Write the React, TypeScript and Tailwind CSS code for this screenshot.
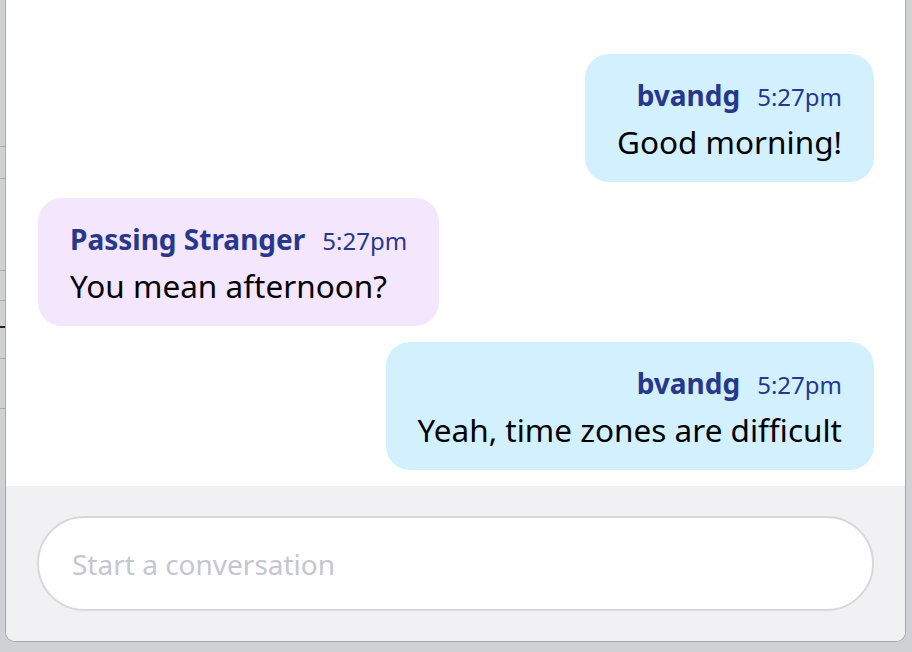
import React from "react";

const font = { fontFamily: '"Noto Sans", "Open Sans", sans-serif' };

function Bubble({
  name,
  time,
  text,
  mine,
}: {
  name: string;
  time: string;
  text: string;
  mine?: boolean;
}) {
  return (
    <div className={mine ? "flex justify-end" : "flex justify-start"}>
      <div
        className={
          "rounded-[24px] pl-8 pr-8 pt-[22px] pb-[19px] " +
          (mine ? "bg-[#d3f0fe] text-right" : "bg-[#f4e6fc] text-left")
        }
      >
        <div
          className={
            "flex items-baseline gap-[17px] h-[38px] leading-[38px] " +
            (mine ? "justify-end" : "justify-start")
          }
        >
          <span className="text-[28px] font-bold text-[#27388c]">{name}</span>
          <span className="text-[24px] text-[#27388c]">{time}</span>
        </div>
        <div className="mt-[7px] text-[31.5px] leading-[42px] text-black">{text}</div>
      </div>
    </div>
  );
}

export default function App() {
  return (
    <div
      className="relative h-[652px] w-[912px] overflow-hidden bg-[#cfd1d5]"
      style={font}
    >
      <div className="absolute left-0 top-[146px] h-px w-[5px] bg-[#a9abb0]" />
      <div className="absolute left-0 top-[178px] h-px w-[5px] bg-[#a9abb0]" />
      <div className="absolute left-0 top-[270px] h-px w-[5px] bg-[#a9abb0]" />
      <div className="absolute left-0 top-[300px] h-px w-[5px] bg-[#a9abb0]" />
      <div className="absolute left-0 top-[326px] h-[2px] w-[5px] bg-[#222]" />
      <div className="absolute left-0 top-[358px] h-px w-[5px] bg-[#a9abb0]" />
      <div className="absolute left-0 top-[408px] h-px w-[5px] bg-[#a9abb0]" />
      <div className="ml-[5px] flex h-[642px] w-[901px] flex-col overflow-hidden rounded-b-[10px] border-x border-b border-[#a8a8ad] bg-white">
        <div className="flex flex-1 flex-col justify-end gap-4 pl-8 pr-[31px] pb-4">
          <Bubble mine name="bvandg" time="5:27pm" text="Good morning!" />
          <Bubble name="Passing Stranger" time="5:27pm" text="You mean afternoon?" />
          <Bubble mine name="bvandg" time="5:27pm" text="Yeah, time zones are difficult" />
        </div>
        <div className="h-[155px] bg-[#f1f1f3] px-[31px] py-[30px]">
          <div className="flex h-[95px] items-center rounded-full border-2 border-[#d7d7dd] bg-white px-[33px]">
            <span className="text-[28px] text-[#c6c6cd]">Start a conversation</span>
          </div>
        </div>
      </div>
    </div>
  );
}
